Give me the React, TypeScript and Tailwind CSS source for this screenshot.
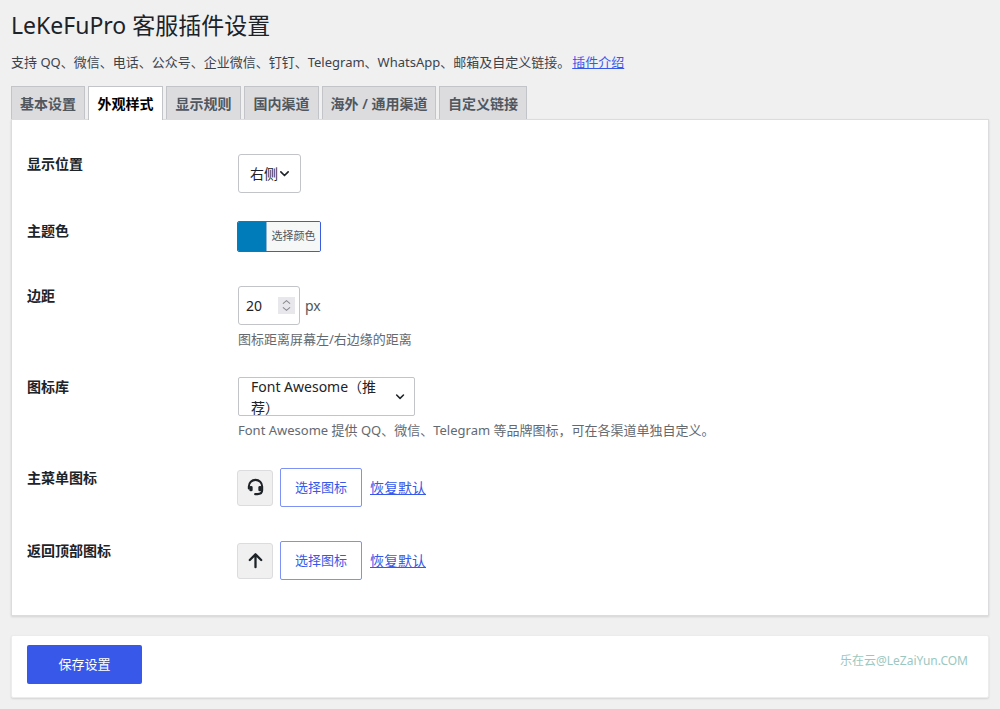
import React from "react";

const font = { fontFamily: '"Noto Sans", "Noto Sans CJK SC", sans-serif' };

function Chevron({ className }: { className?: string }) {
  return (
    <svg viewBox="0 0 16 16" className={className} fill="none" stroke="#1d2327" strokeWidth="2" strokeLinecap="round" strokeLinejoin="round">
      <path d="M3.5 6 L8 10.5 L12.5 6" />
    </svg>
  );
}

function Tab({ label, active, w }: { label: string; active?: boolean; w: string }) {
  return (
    <div
      className={`${w} flex items-center justify-center border border-b-0 border-[#c3c4c7] text-[14px] font-semibold ${
        active ? "h-[34px] -mb-px bg-white text-black z-10 relative" : "h-[33px] bg-[#dcdcde] text-[#50575e]"
      }`}
    >
      {label}
    </div>
  );
}

function Row({ label, children, className }: { label: string; children: React.ReactNode; className?: string }) {
  return (
    <div className={`flex ${className ?? ""}`}>
      <div className="w-[211px] shrink-0 text-[14px] font-semibold text-[#1d2327] leading-[20px]">{label}</div>
      <div>{children}</div>
    </div>
  );
}

function IconRow({ icon }: { icon: React.ReactNode }) {
  return (
    <div className="flex items-center -ml-px">
      <div className="w-[36px] h-[36px] flex items-center justify-center rounded-[3px] bg-[#f0f0f1] border border-[#dcdcde]">{icon}</div>
      <button className="ml-[7px] w-[82px] h-[39px] rounded-[2px] border border-[#7e92f5] bg-white text-[13px] text-[#3858e9]">选择图标</button>
      <a className="ml-[8px] text-[14px] text-[#3858e9] underline">恢复默认</a>
    </div>
  );
}

export default function App() {
  return (
    <div style={font} className="min-h-[709px] bg-[#f0f0f1] px-[11px] text-[#3c434a] overflow-hidden">
      <h1 className="pt-[9px] text-[23px] leading-[32px] font-normal text-[#1d2327]">LeKeFuPro 客服插件设置</h1>
      <p className="mt-[11px] text-[13px] leading-[20px] text-[#3c434a]">
        支持 QQ、微信、电话、公众号、企业微信、钉钉、Telegram、WhatsApp、邮箱及自定义链接。
        <a className="ml-[2px] text-[#3858e9] underline">插件介绍</a>
      </p>
      <div className="mt-[14px] flex items-end gap-[3px]">
        <Tab w="w-[74px]" label="基本设置" />
        <Tab w="w-[75px]" label="外观样式" active />
        <Tab w="w-[75px]" label="显示规则" />
        <Tab w="w-[75px]" label="国内渠道" />
        <Tab w="w-[114px]" label="海外 / 通用渠道" />
        <Tab w="w-[88px]" label="自定义链接" />
      </div>
      <div className="h-[497px] bg-white border border-[#dcdcde] shadow-[0_1px_2px_rgba(0,0,0,0.12)] pl-[15px] pr-[15px] pt-[36px]">
        <Row label="显示位置" className="h-[67px] -mt-[2px]">
          <div className="mt-[0px] ml-0 w-[63px] h-[39px] flex items-center rounded-[3px] border border-[#c3c4c7] pl-[11px] text-[14px] text-[#1d2327]">
            右侧
            <Chevron className="w-[13px] h-[13px]" />
          </div>
        </Row>
        <Row label="主题色" className="h-[65px] ">
          <div className="-ml-px flex w-[84px] h-[31px] rounded-[2px] border border-[#3a5ce0] overflow-hidden">
            <div className="w-[29px] bg-[#007cba] border-r border-[#8cb4d4]" />
            <div className="flex-1 bg-[#f6f7f7] flex items-center justify-center text-[11px] text-[#50575e]">选择颜色</div>
          </div>
        </Row>
        <Row label="边距" className="h-[91px]">
          <div className="flex items-center">
            <div className="w-[62px] h-[39px] flex items-center justify-between rounded-[3px] border border-[#c3c4c7] pl-[7px] pr-[3px] text-[14px] text-[#1d2327]">
              20
              <div className="w-[17px] h-[17px] mr-[1px] bg-[#e8e8ec] flex items-center justify-center">
                <svg viewBox="0 0 16 18" className="w-[13px] h-[15px]" fill="none" stroke="#8a8a90" strokeWidth="1.3" strokeLinecap="round" strokeLinejoin="round">
                  <path d="M4 6.5 L8 3 L12 6.5 M4 11.5 L8 15 L12 11.5" />
                </svg>
              </div>
            </div>
            <span className="ml-[5px] text-[14px] text-[#50575e]">px</span>
          </div>
          <p className="mt-[4px] text-[13px] leading-[20px] text-[#646970]">图标距离屏幕左/右边缘的距离</p>
        </Row>
        <Row label="图标库" className="h-[91px]">
          <div className="w-[177px] h-[39px] flex items-center justify-between rounded-[2px] border border-[#c3c4c7] pl-[12px] pr-[8px] text-[14px] text-[#1d2327]">
            Font Awesome（推荐）
            <Chevron className="w-[13px] h-[13px]" />
          </div>
          <p className="mt-[4px] text-[13px] leading-[20px] text-[#646970]">Font Awesome 提供 QQ、微信、Telegram 等品牌图标，可在各渠道单独自定义。</p>
        </Row>
        <Row label="主菜单图标" className="h-[73px]">
          <IconRow
            icon={
              <svg viewBox="0 0 20 20" className="w-[19px] h-[19px]" fill="none" stroke="#1d2327" strokeLinecap="round">
                <path d="M3 11 V9 a7 7 0 0 1 14 0 V13 q0 4 -5 4" strokeWidth="2.2" />
                <rect x="3.5" y="8.5" width="3.5" height="5.5" rx="1.5" fill="#1d2327" stroke="none" />
                <rect x="13" y="8.5" width="3.5" height="5.5" rx="1.5" fill="#1d2327" stroke="none" />
                <rect x="8.5" y="15.8" width="4" height="2.4" rx="1.2" fill="#1d2327" stroke="none" />
              </svg>
            }
          />
        </Row>
        <Row label="返回顶部图标">
          <IconRow
            icon={
              <svg viewBox="0 0 20 20" className="w-[19px] h-[19px]" fill="none" stroke="#1d2327" strokeWidth="2.4" strokeLinecap="round" strokeLinejoin="round">
                <path d="M10 17 V3.5 M4 9.5 L10 3.5 L16 9.5" />
              </svg>
            }
          />
        </Row>
      </div>
      <div className="mt-[19px] h-[63px] bg-white border border-[#ececec] shadow-[0_1px_2px_rgba(0,0,0,0.12)] rounded-[2px] pl-[15px] pr-[20px] flex items-start justify-between">
        <button className="mt-[9px] w-[115px] h-[39px] rounded-[2px] bg-[#3858e9] text-[13px] text-white">保存设置</button>
        <span className="mt-[15px] text-[12px] leading-[20px] text-[#9cc7bf]">乐在云@LeZaiYun.COM</span>
      </div>
    </div>
  );
}
